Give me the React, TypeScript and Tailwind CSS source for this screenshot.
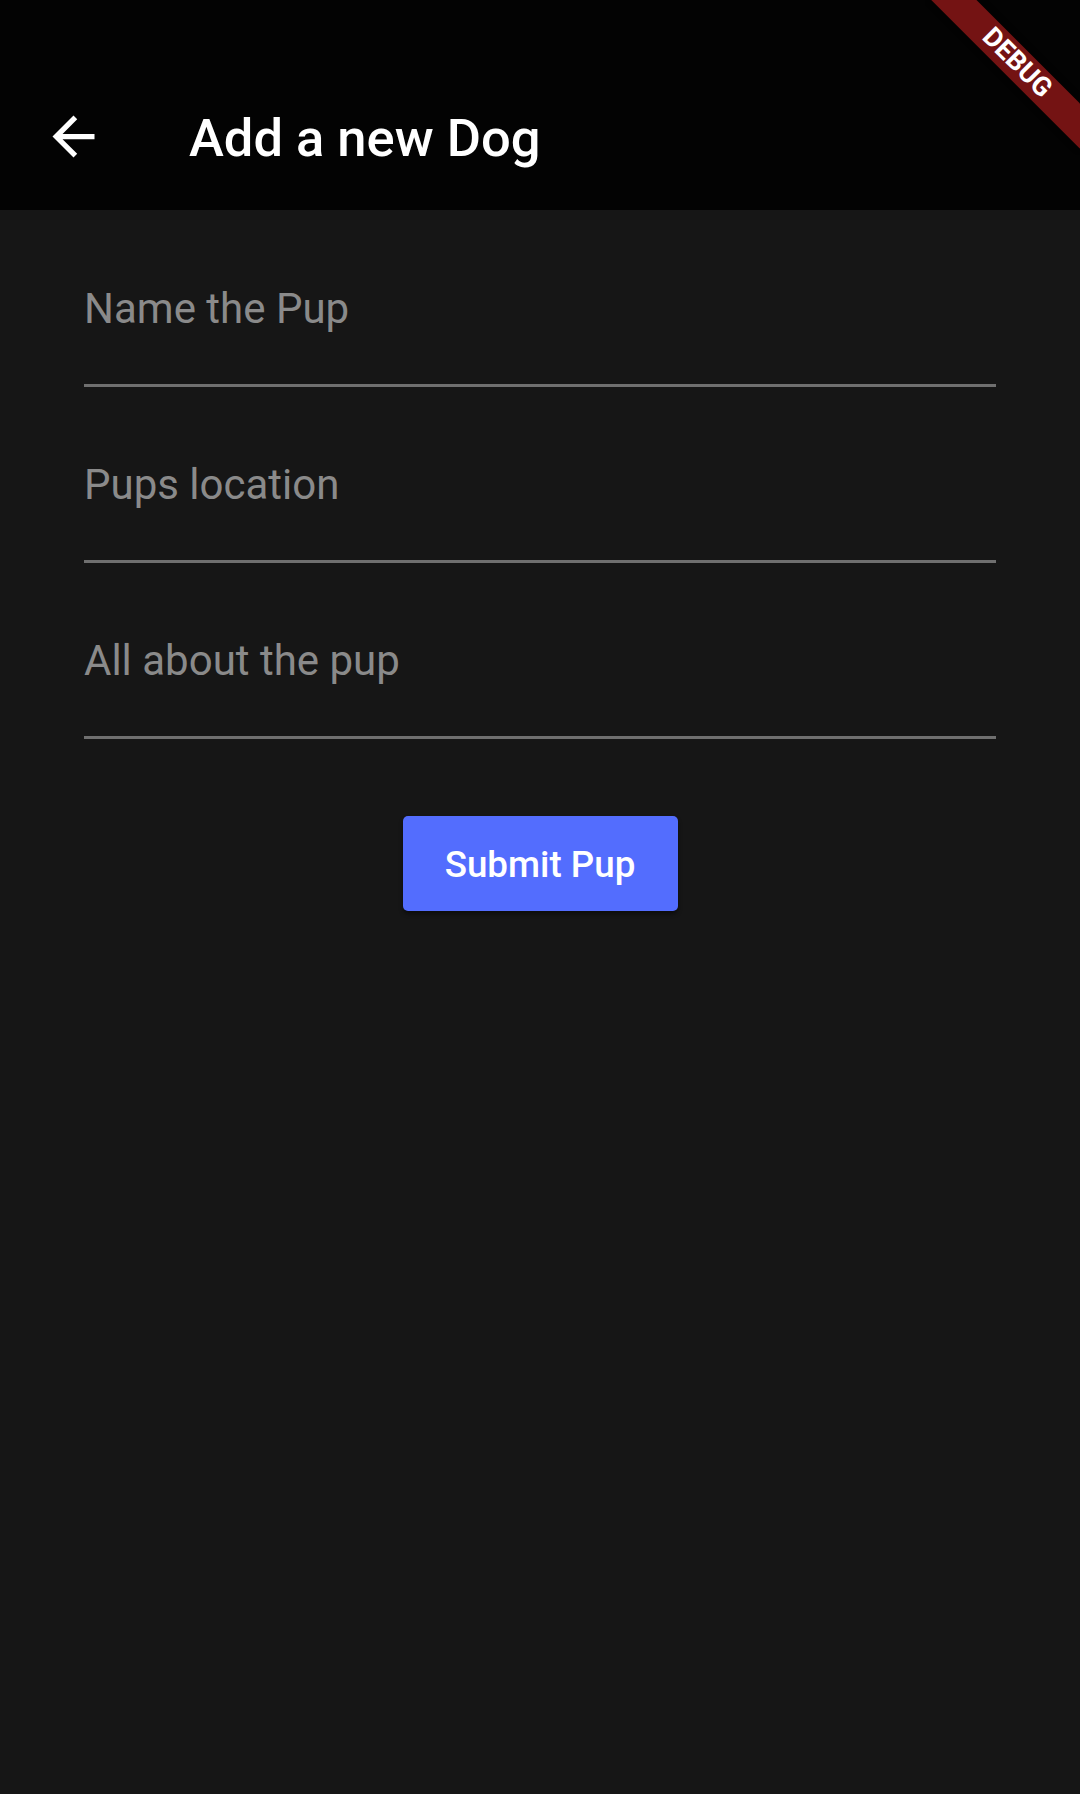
import React from "react";

function BackArrow() {
  return (
    <svg width="63" height="63" viewBox="0 0 24 24" fill="#ffffff" aria-hidden="true">
      <path d="M20 11H7.83l5.59-5.59L12 4l-8 8 8 8 1.41-1.41L7.83 13H20v-2z" />
    </svg>
  );
}

function Field({ hint, first }: { hint: string; first?: boolean }) {
  return (
    <div
      className={
        (first ? "mt-[74px] " : "mt-[73px] ") +
        "border-b-[3px] border-[#6f6f6f] pb-[50px]"
      }
    >
      <div className="h-[50px] text-[42px] leading-[50px] text-[#8a8a8a]">{hint}</div>
    </div>
  );
}

export default function App() {
  return (
    <div
      className="relative w-[1080px] h-[1794px] overflow-hidden bg-[#161616]"
      style={{ fontFamily: "Roboto, 'Noto Sans', sans-serif" }}
    >
      {/* App bar */}
      <header className="h-[210px] bg-[#030303] pt-[63px]">
        <div className="flex h-[147px] items-center">
          <div className="flex h-[147px] w-[147px] items-center justify-center">
            <BackArrow />
          </div>
          <h1 className="ml-[42px] mt-[3px] text-[52.5px] font-medium leading-none text-white">
            Add a new Dog
          </h1>
        </div>
      </header>

      {/* Form */}
      <main className="px-[84px]">
        <Field hint="Name the Pup" first />
        <Field hint="Pups location" />
        <Field hint="All about the pup" />
        <div className="mt-[77px] flex justify-center">
          <button className="flex h-[95px] w-[275px] items-center justify-center rounded-[5px] bg-[#536DFE] pt-[4px] text-[36.75px] font-medium leading-none text-white shadow-[0_3px_4px_rgba(0,0,0,0.45)]">
            Submit Pup
          </button>
        </div>
      </main>

      {/* Debug banner */}
      <div className="pointer-events-none absolute left-[912px] top-[47px] flex h-[31.5px] w-[210px] rotate-45 items-center justify-center bg-[rgba(183,28,28,0.627)] shadow-[0_0_6px_rgba(0,0,0,0.5)]">
        <span className="text-[26.8px] font-bold leading-none text-white">DEBUG</span>
      </div>
    </div>
  );
}
